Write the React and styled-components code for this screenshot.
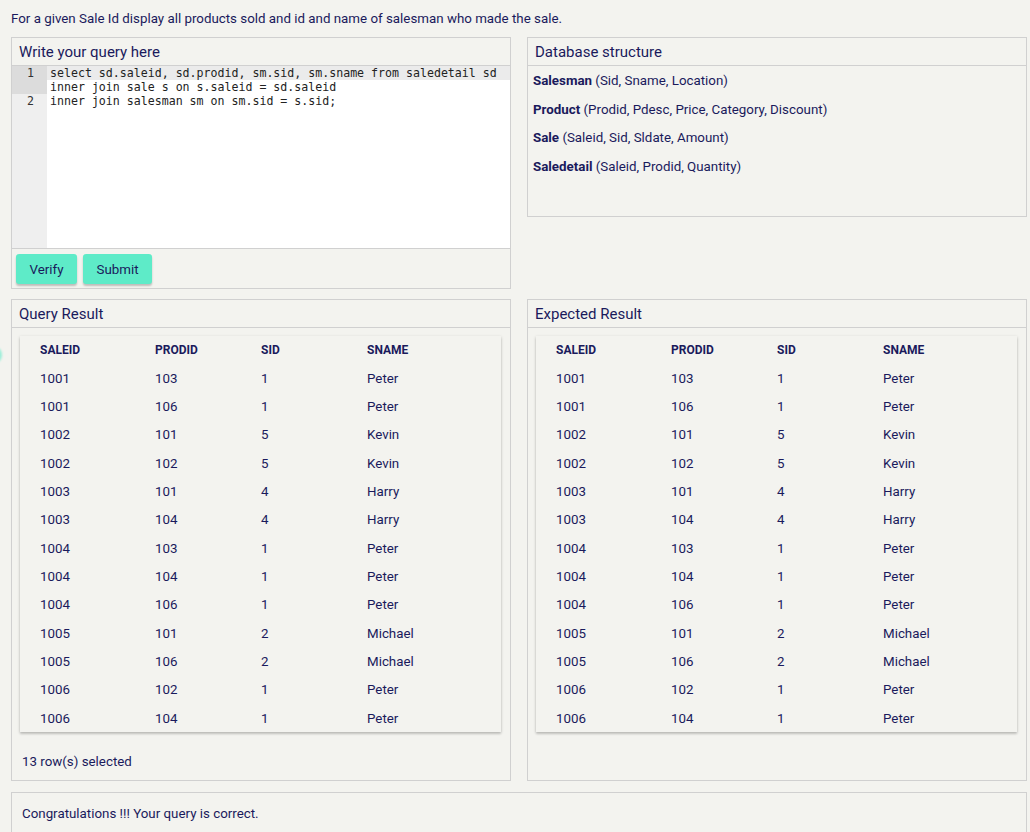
import React from "react";
import styled, { createGlobalStyle } from "styled-components";

const Global = createGlobalStyle`
  html, body { margin: 0; padding: 0; background: #f3f3ef; }
  body { font-family: Roboto, "Liberation Sans", sans-serif; color: #1a1a5c; overflow: hidden; }
  * { box-sizing: border-box; }
`;

const Page = styled.div`
  position: relative;
  width: 1030px;
  padding: 0 3px 0 11px;
`;

const Question = styled.div`
  font-size: 13.33px;
  line-height: 15px;
  padding-top: 11px;
  height: 37px;
`;

const Row = styled.div`
  display: flex;
  gap: 16px;
  align-items: ${(p) => p.$align || "stretch"};
  margin-bottom: ${(p) => p.$mb || 0}px;
`;

const Panel = styled.div`
  width: ${(p) => p.$w || 500}px;
  border: 1px solid #d0d0d0;
  display: flex;
  flex-direction: column;
`;

const PanelHeader = styled.div`
  height: 28px;
  border-bottom: 1px solid #d0d0d0;
  font-size: 15px;
  line-height: 28px;
  padding-left: 7px;
`;

const Editor = styled.div`
  display: flex;
  height: 183px;
  background: #fff;
  border-bottom: 1px solid #d0d0d0;
  font-family: "DejaVu Sans Mono", "Liberation Mono", monospace;
  font-size: 11.6px;
  line-height: 14px;
  color: #222;
`;

const Gutter = styled.div`
  width: 35px;
  background: #efefef;
`;

const LineNo = styled.div`
  height: ${(p) => p.$lines * 14}px;
  text-align: right;
  padding-right: 13px;
  background: ${(p) => (p.$active ? "#dcdcdc" : "transparent")};
  color: #333;
`;

const Code = styled.div`
  flex: 1;
`;

const CodeLine = styled.div`
  height: 14px;
  padding-left: 3px;
  white-space: pre;
  background: ${(p) => (p.$active ? "#ebebeb" : "transparent")};
`;

const ButtonBar = styled.div`
  display: flex;
  gap: 6px;
  padding: 5px 4px 3px;
  height: 39px;
`;

const Button = styled.button`
  height: 30px;
  padding: 0 13.5px;
  border: none;
  border-radius: 3px;
  background: #5eebc8;
  color: #1a1a5c;
  font-family: Roboto, sans-serif;
  font-size: 13.33px;
  box-shadow: 0 2px 2px rgba(0, 0, 0, 0.22);
  cursor: pointer;
`;

const SchemaList = styled.div`
  display: flex;
  flex-direction: column;
  gap: 13.5px;
  padding: 7px 5px 42px;
  font-size: 13.33px;
  line-height: 15px;
`;

const SchemaItem = styled.div`
  b { font-weight: 700; }
`;

const Card = styled.div`
  margin: 8px 9px 0 8px;
  box-shadow: 0 1px 3px rgba(0, 0, 0, 0.18), 0 2px 2px rgba(0, 0, 0, 0.12);
  background: #f3f3ef;
`;

const TRow = styled.div`
  display: grid;
  grid-template-columns: 115px 106px 106px 1fr;
  padding-left: 20px;
  height: ${(p) => (p.$head ? "28px" : "28.33px")};
  align-items: center;
  font-size: ${(p) => (p.$head ? "12px" : "13.33px")};
  font-weight: ${(p) => (p.$head ? 700 : 400)};
`;

const Footer = styled.div`
  font-size: 13.33px;
  line-height: 15px;
  padding: 22px 10px 11px;
`;

const Message = styled.div`
  border: 1px solid #d0d0d0;
  width: 1016px;
  height: 60px;
  font-size: 13.33px;
  line-height: 15px;
  padding: 13px 10px;
`;

const Glow = styled.div`
  position: absolute;
  left: -12px;
  top: 347px;
  width: 14px;
  height: 16px;
  border-radius: 50%;
  background: #5eebc8;
  opacity: 0.6;
  filter: blur(1px);
`;

const rows = [
  [1001, 103, 1, "Peter"],
  [1001, 106, 1, "Peter"],
  [1002, 101, 5, "Kevin"],
  [1002, 102, 5, "Kevin"],
  [1003, 101, 4, "Harry"],
  [1003, 104, 4, "Harry"],
  [1004, 103, 1, "Peter"],
  [1004, 104, 1, "Peter"],
  [1004, 106, 1, "Peter"],
  [1005, 101, 2, "Michael"],
  [1005, 106, 2, "Michael"],
  [1006, 102, 1, "Peter"],
  [1006, 104, 1, "Peter"],
];

function ResultTable() {
  return (
    <Card>
      <TRow $head>
        <span>SALEID</span>
        <span>PRODID</span>
        <span>SID</span>
        <span>SNAME</span>
      </TRow>
      {rows.map((r, i) => (
        <TRow key={i}>
          {r.map((c, j) => (
            <span key={j}>{c}</span>
          ))}
        </TRow>
      ))}
    </Card>
  );
}

export default function App() {
  return (
    <Page>
      <Global />
      <Glow />
      <Question>For a given Sale Id display all products sold and id and name of salesman who made the sale.</Question>
      <Row $align="flex-start" $mb={10}>
        <Panel>
          <PanelHeader>Write your query here</PanelHeader>
          <Editor>
            <Gutter>
              <LineNo $lines={2} $active>1</LineNo>
              <LineNo $lines={1}>2</LineNo>
            </Gutter>
            <Code>
              <CodeLine $active>select sd.saleid, sd.prodid, sm.sid, sm.sname from saledetail sd</CodeLine>
              <CodeLine>inner join sale s on s.saleid = sd.saleid</CodeLine>
              <CodeLine>inner join salesman sm on sm.sid = s.sid;</CodeLine>
            </Code>
          </Editor>
          <ButtonBar>
            <Button>Verify</Button>
            <Button>Submit</Button>
          </ButtonBar>
        </Panel>
        <Panel>
          <PanelHeader>Database structure</PanelHeader>
          <SchemaList>
            <SchemaItem><b>Salesman</b> (Sid, Sname, Location)</SchemaItem>
            <SchemaItem><b>Product</b> (Prodid, Pdesc, Price, Category, Discount)</SchemaItem>
            <SchemaItem><b>Sale</b> (Saleid, Sid, Sldate, Amount)</SchemaItem>
            <SchemaItem><b>Saledetail</b> (Saleid, Prodid, Quantity)</SchemaItem>
          </SchemaList>
        </Panel>
      </Row>
      <Row $mb={11}>
        <Panel>
          <PanelHeader>Query Result</PanelHeader>
          <ResultTable />
          <Footer>13 row(s) selected</Footer>
        </Panel>
        <Panel>
          <PanelHeader>Expected Result</PanelHeader>
          <ResultTable />
        </Panel>
      </Row>
      <Message>Congratulations !!! Your query is correct.</Message>
    </Page>
  );
}
